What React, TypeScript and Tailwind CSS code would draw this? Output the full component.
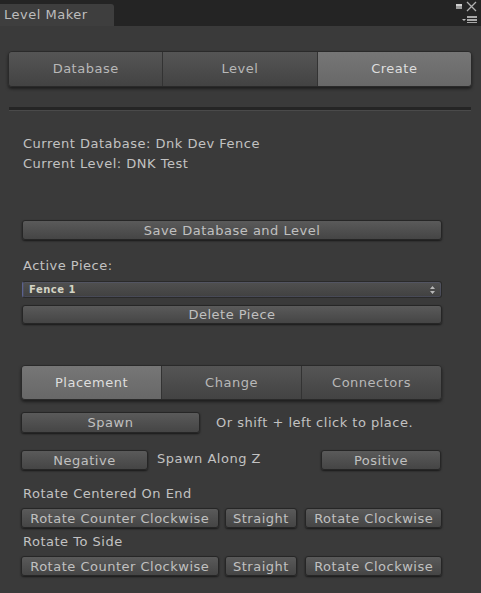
import React from "react";

const btn =
  "flex items-center justify-center rounded-[3px] border border-[#262626] bg-gradient-to-b from-[#5a5a5a] to-[#454545] text-[#c0c0c0] shadow-[0_1px_2px_rgba(0,0,0,0.6)] text-[13px] leading-none";

function Segmented({
  items,
  active,
  className,
}: {
  items: string[];
  active: number;
  className: string;
}) {
  return (
    <div
      className={`flex overflow-hidden rounded-[4px] border border-[#2a2a2a] shadow-[0_2px_3px_rgba(0,0,0,0.5)] ${className}`}
    >
      {items.map((label, i) => (
        <div
          key={label}
          className={`flex flex-1 items-center justify-center text-[13px] ${
            i > 0 ? "border-l border-[#333333]" : ""
          } ${
            i === active
              ? "bg-gradient-to-b from-[#767676] to-[#686868] text-[#dedede]"
              : "bg-gradient-to-b from-[#555555] to-[#434343] text-[#b8b8b8]"
          }`}
        >
          {label}
        </div>
      ))}
    </div>
  );
}

function RotateRow() {
  return (
    <div className="flex h-[20px] gap-[6px]">
      <div className={`${btn} w-[198px]`}>Rotate Counter Clockwise</div>
      <div className={`${btn} w-[73px]`}>Straight</div>
      <div className={`${btn} ml-[2px] w-[137px]`}>Rotate Clockwise</div>
    </div>
  );
}

export default function App() {
  return (
    <div
      className="flex h-[593px] w-[481px] flex-col bg-[#3a3a3a] tracking-[0.5px] text-[#c2c2c2]"
      style={{ fontFamily: '"DejaVu Sans", sans-serif' }}
    >
      {/* window tab strip */}
      <div className="flex h-[26px] items-end justify-between bg-[#242424]">
        <div className="flex h-[22px] w-[114px] items-center rounded-tr-[3px] bg-[#3e3e3e] pl-[4px] text-[13px] text-[#bdbdbd]">
          Level Maker
        </div>
        <svg width="30" height="26" viewBox="0 0 30 26" className="self-start">
          <rect x="5" y="4" width="6" height="5" fill="#9a9a9a" />
          <rect x="5" y="4" width="6" height="2" fill="#cfcfcf" />
          <path d="M16 2 L25 11 M25 2 L16 11" stroke="#b0b0b0" strokeWidth="1.3" />
          <path d="M11 19 L15 19 L13 21 Z" fill="#bdbdbd" />
          <rect x="16" y="16" width="10" height="2" fill="#a8a8a8" />
          <rect x="16" y="19" width="10" height="2" fill="#a8a8a8" />
          <rect x="16" y="22" width="10" height="1" fill="#a8a8a8" />
        </svg>
      </div>

      <div className="flex flex-col px-[8px]">
        <Segmented
          items={["Database", "Level", "Create"]}
          active={2}
          className="mt-[25px] h-[36px] w-[464px]"
        />
        <div className="ml-[1px] mt-[20px] h-[3px] w-[462px] bg-[#252525] shadow-[0_1px_0_#4a4a4a]" />

        <div className="flex w-[434px] flex-col pl-[13px]">
          <div className="ml-[2px] mt-[24px] h-[20px] leading-[20px] text-[13px]">
            Current Database: Dnk Dev Fence
          </div>
          <div className="ml-[2px] h-[20px] leading-[20px] text-[13px]">Current Level: DNK Test</div>

          <div className={`${btn} ml-[1px] mt-[46px] h-[20px] w-[420px]`}>Save Database and Level</div>

          <div className="ml-[2px] mt-[16px] h-[20px] leading-[20px] text-[13px]">Active Piece:</div>

          <div className="ml-[1px] mt-[5px] flex h-[17px] w-[420px] items-center justify-between rounded-[3px] border border-[#2a2a2a] border-l-[#5b6290] bg-gradient-to-b from-[#505050] to-[#414141] pl-[6px] pr-[6px] shadow-[inset_0_0_0_1px_rgba(90,98,150,0.25)]">
            <span className="text-[10px] font-bold tracking-[0.5px] text-[#d4d4c4]">Fence 1</span>
            <svg width="5" height="8" viewBox="0 0 5 8">
              <path d="M0 3 L2.5 0 L5 3 Z M0 5 L2.5 8 L5 5 Z" fill="#b8b8b8" />
            </svg>
          </div>

          <div className={`${btn} ml-[1px] mt-[7px] h-[19px] w-[420px]`}>Delete Piece</div>

          <Segmented
            items={["Placement", "Change", "Connectors"]}
            active={0}
            className="mt-[41px] h-[35px] w-[421px]"
          />

          <div className="mt-[12px] flex h-[21px] items-center">
            <div className={`${btn} h-[21px] w-[179px]`}>Spawn</div>
            <span className="ml-[16px] text-[13px]">Or shift + left click to place.</span>
          </div>

          <div className="mt-[17px] flex h-[20px] w-[421px] items-center">
            <div className={`${btn} h-[20px] w-[127px]`}>Negative</div>
            <span className="ml-[9px] -mt-[3px] text-[13px]">Spawn Along Z</span>
            <div className={`${btn} ml-auto mr-[1px] h-[20px] w-[120px]`}>Positive</div>
          </div>

          <div className="ml-[2px] mt-[15px] h-[18px] leading-[18px] text-[13px]">Rotate Centered On End</div>
          <div className="mt-[5px]">
            <RotateRow />
          </div>
          <div className="ml-[2px] mt-[5px] h-[18px] leading-[18px] text-[13px]">Rotate To Side</div>
          <div className="mt-[5px]">
            <RotateRow />
          </div>
        </div>
      </div>
    </div>
  );
}
